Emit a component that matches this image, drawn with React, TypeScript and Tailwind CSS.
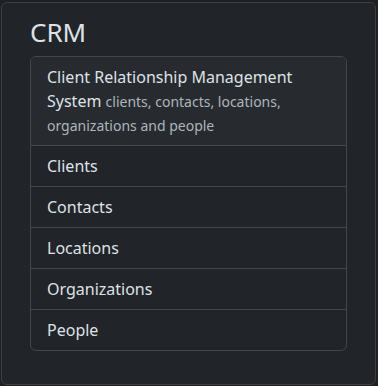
export default function App() {
    const links = ["Clients", "Contacts", "Locations", "Organizations", "People"]

    return (
        <main className="min-h-screen bg-[#1e2023] pt-[2px] pl-[1px] font-['Noto_Sans',sans-serif] text-[#dee2e6]">
            <div className="w-[375px] h-[383px] rounded-[6px] border border-[#3b3f44] bg-[#212529] px-[28px] pt-[14px]">
                <h3 className="text-[26px] leading-[1.2] mb-[8px]">CRM</h3>
                <ul className="rounded-[6px] border border-[#42474d] overflow-hidden">
                    <li className="bg-[#272b30] px-4 py-2 text-[16px] leading-6 border-b border-[#42474d]">
                        Client Relationship Management System{" "}
                        <span className="text-[14px] leading-none text-[#adb5bd]">clients, contacts, locations, organizations and people</span>
                    </li>
                    {links.map((l, i) => (
                        <li
                            key={l}
                            className={`px-4 py-2 text-[16px] leading-6 ${i < links.length - 1 ? "border-b border-[#42474d]" : ""}`}
                        >
                            {l}
                        </li>
                    ))}
                </ul>
            </div>
        </main>
    )
}
